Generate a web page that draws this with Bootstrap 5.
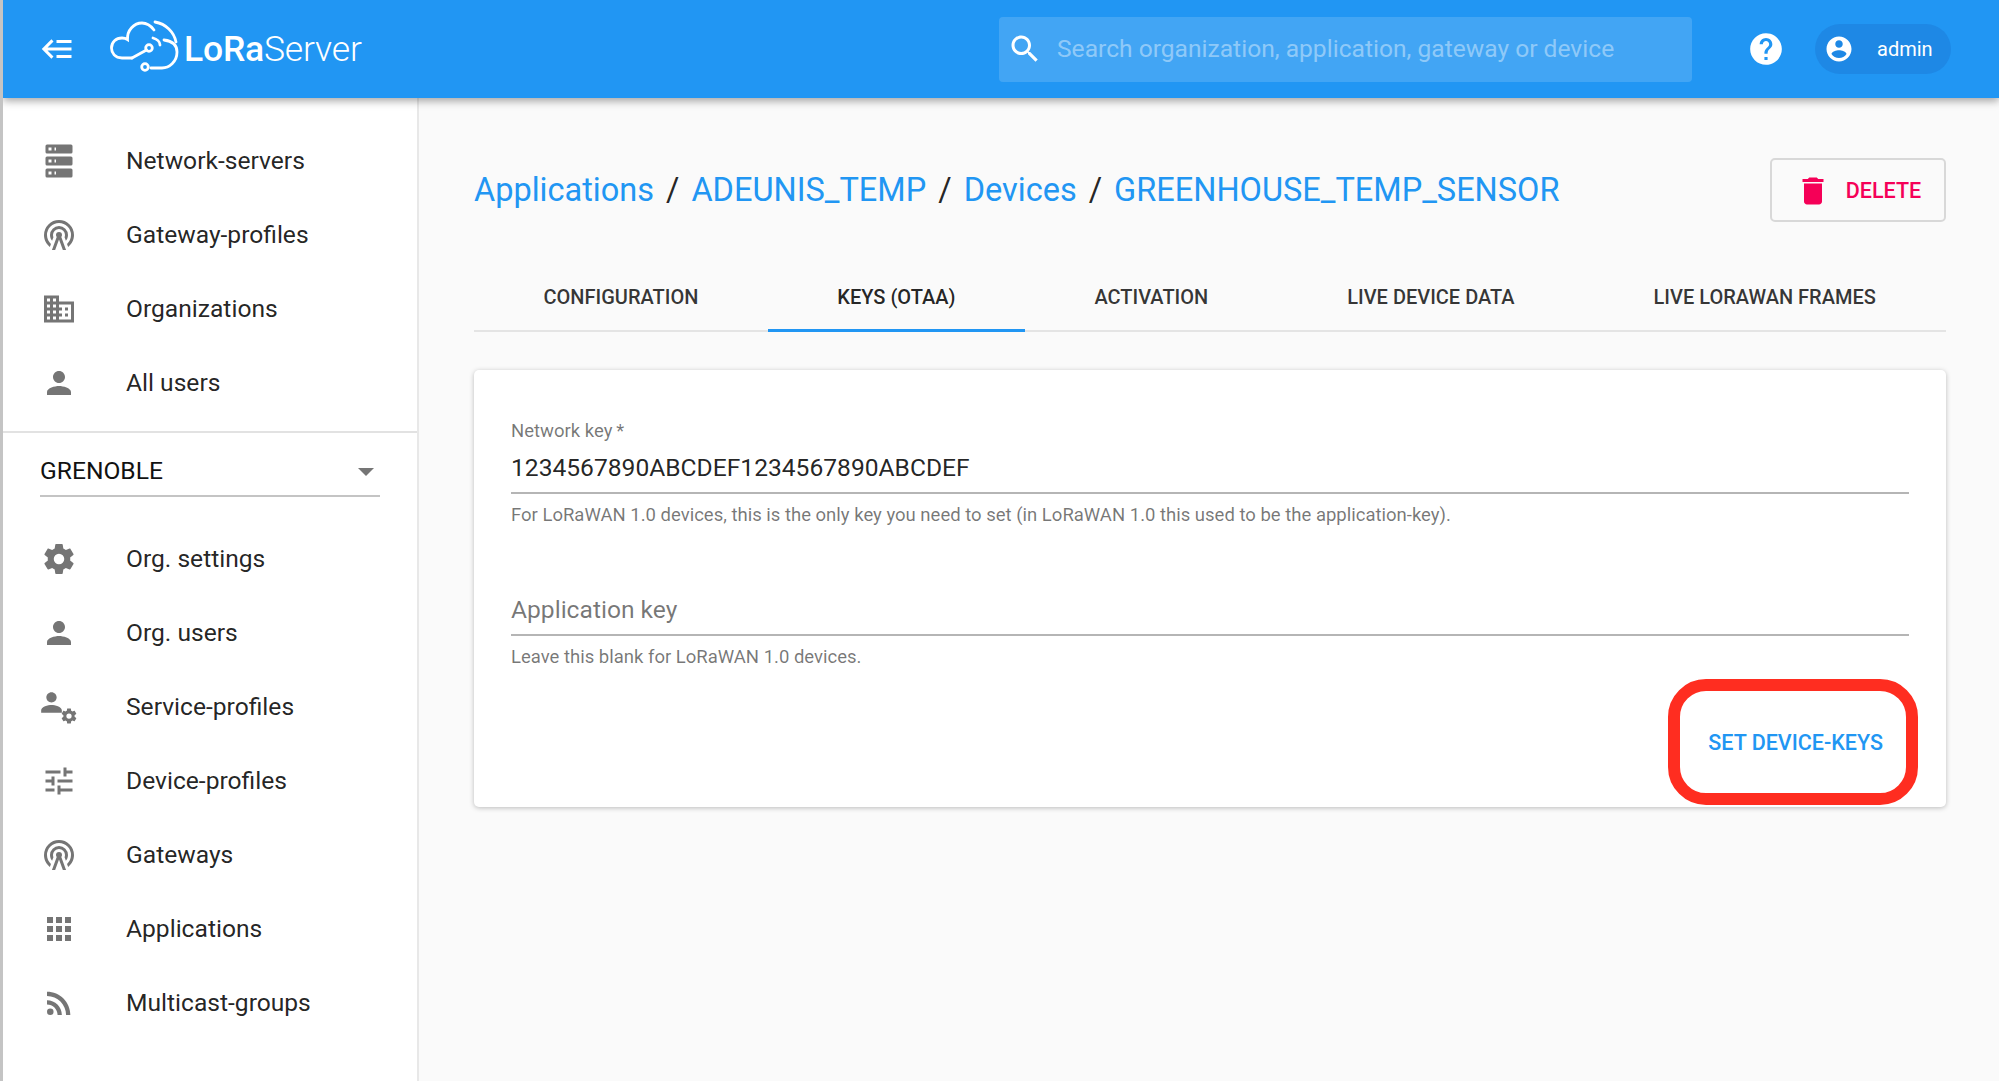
<!DOCTYPE html>
<html lang="en">
<head>
    <meta charset="UTF-8">
    <meta name="viewport" content="width=device-width, initial-scale=1.0">
    <title>LoRa Server</title>
    <link rel="stylesheet" href="https://cdn.jsdelivr.net/npm/bootstrap@5.3.0/dist/css/bootstrap.min.css">
    <style>
        html, body { height: 1081px; overflow: hidden; }
        body { font-family: Roboto, sans-serif; background: #fafafa; color: rgba(0,0,0,.87); border-left: 3px solid #c4c4c4; }
        svg { fill: currentColor; flex-shrink: 0; }
        .defs-svg { display: none; }
        .app-bar { height: 98px; background: #2196f3; color: #fff; box-shadow: 0 3px 8px rgba(0,0,0,.35); position: relative; z-index: 2; padding-left: 37px; }
        .logo-wrap { margin-left: 32px; width: 253px; }
        .logo-mark { fill: none; stroke: #fff; stroke-width: 2.8; stroke-linecap: round; }
        .logo-text { font-size: 35.5px; line-height: 1; letter-spacing: -.2px; margin-left: 4px; padding-top: 2px; font-weight: 500; }
        .logo-text span { font-weight: 300; }
        .search-box { width: 693px; height: 65px; margin-left: 638px; background: rgba(255,255,255,.15); border-radius: 4px; padding-left: 8px; }
        .search-box input { background: none; border: 0; outline: 0; flex: 1; font-size: 24.6px; margin-left: 12px; color: #fff; }
        .search-box input::placeholder { color: rgba(255,255,255,.42); }
        .help-ico { margin-left: 55px; }
        .user-pill { width: 136px; height: 50px; border-radius: 25px; background: #1e88e5; margin-left: 30px; padding-left: 9px; font-size: 20px; }
        .user-pill span { margin-left: 23px; }
        .side-menu { width: 416px; height: 983px; background: #fff; border-right: 2px solid #e8e8e8; padding-top: 26px; flex-shrink: 0; }
        .side-link { height: 74px; padding: 0 0 0 38px; border: 0; display: flex; align-items: center; color: rgba(0,0,0,.87); font-size: 24.6px; background: none; text-decoration: none; }
        .side-link svg { color: #757575; margin-right: 49px; }
        .side-rule { border-top: 2px solid #e2e2e2; margin-top: 11px; }
        .org-select { margin: 0 37px 25px; height: 64px; border-bottom: 2px solid #c4c4c4; font-size: 24.6px; color: #111; padding-top: 15px; }
        .org-caret { width: 0; height: 0; border-left: 8px solid transparent; border-right: 8px solid transparent; border-top: 8px solid #757575; margin-right: 6px; }
        .main-area { padding: 60px 53px 0 55px; }
        .crumbs { font-size: 32.5px; height: 64px; }
        .crumbs a { color: #2196f3; text-decoration: none; }
        .crumbs i { font-style: normal; margin: 0 12px; color: rgba(0,0,0,.87); }
        .del-btn { width: 176px; height: 64px; border: 2px solid #d8d8d8; border-radius: 5px; background: #fafafa; color: #f50057; font-size: 21.5px; font-weight: 500; padding: 2px 0 0; gap: 15px; }
        .tab-row { margin-top: 39px; border-bottom: 2px solid #e4e4e4; height: 71px; flex-wrap: nowrap; }
        .tab-row .nav-link { padding: 4px 69.5px 0; height: 71px; display: flex; align-items: center; white-space: nowrap; color: rgba(0,0,0,.8); font-size: 20px; font-weight: 500; border-bottom: 3px solid transparent; border-radius: 0; }
        .tab-row .nav-link.active { color: rgba(0,0,0,.87); border-bottom-color: #2196f3; }
        .key-card { margin-top: 38px; height: 437px; border: 0; border-radius: 5px; box-shadow: 0 1px 5px rgba(0,0,0,.25); padding: 49px 37px 0; }
        .key-label { font-size: 18.5px; color: rgba(0,0,0,.54); margin: 0 0 7px; line-height: 24px; display: block; }
        .key-input { border: 0; border-bottom: 2px solid #b5b5b5; border-radius: 0; background: none; padding: 0 0 6px; font-size: 24.6px; line-height: 36px; color: rgba(0,0,0,.87); box-shadow: none !important; }
        .key-input::placeholder { color: rgba(0,0,0,.54); opacity: 1; }
        .key-help { font-size: 18.5px; color: rgba(0,0,0,.54); margin-top: 9px; line-height: 25px; }
        .set-area { margin-top: 57px; padding-right: 26px; }
        .set-btn { position: relative; color: #2196f3; font-size: 21.5px; font-weight: 500; background: none; border: 0; padding: 0; }
        .mark-box { position: absolute; left: -40px; right: -35px; top: -48px; bottom: -46px; border: 12px solid #ff2d20; border-radius: 38px; pointer-events: none; }
    </style>
</head>
<body>
<svg class="defs-svg">
    <symbol id="i-server" viewBox="0 0 24 24"><path d="M4,1H20A1,1 0 0,1 21,2V6A1,1 0 0,1 20,7H4A1,1 0 0,1 3,6V2A1,1 0 0,1 4,1M4,9H20A1,1 0 0,1 21,10V14A1,1 0 0,1 20,15H4A1,1 0 0,1 3,14V10A1,1 0 0,1 4,9M4,17H20A1,1 0 0,1 21,18V22A1,1 0 0,1 20,23H4A1,1 0 0,1 3,22V18A1,1 0 0,1 4,17M9,5H10V3H9V5M9,13H10V11H9V13M9,21H10V19H9V21M5,3V5H7V3H5M5,11V13H7V11H5M5,19V21H7V19H5Z"/></symbol>
    <symbol id="i-tower" viewBox="0 0 24 24"><path d="M12,10A2,2 0 0,1 14,12C14,12.5 13.82,12.94 13.53,13.29L16.7,22H14.57L12,14.93L9.43,22H7.3L10.47,13.29C10.18,12.94 10,12.5 10,12A2,2 0 0,1 12,10M12,8A4,4 0 0,0 8,12C8,12.5 8.1,13 8.28,13.46L7.4,15.86C6.53,14.81 6,13.47 6,12A6,6 0 0,1 12,6A6,6 0 0,1 18,12C18,13.47 17.47,14.81 16.6,15.86L15.72,13.46C15.9,13 16,12.5 16,12A4,4 0 0,0 12,8M12,4A8,8 0 0,0 4,12C4,14.36 5,16.5 6.64,17.94L5.92,19.94C3.54,18.11 2,15.23 2,12A10,10 0 0,1 12,2A10,10 0 0,1 22,12C22,15.23 20.46,18.11 18.08,19.94L17.36,17.94C19,16.5 20,14.36 20,12A8,8 0 0,0 12,4Z"/></symbol>
    <symbol id="i-domain" viewBox="0 0 24 24"><path d="M12 7V3H2v18h20V7H12zM6 19H4v-2h2v2zm0-4H4v-2h2v2zm0-4H4V9h2v2zm0-4H4V5h2v2zm4 12H8v-2h2v2zm0-4H8v-2h2v2zm0-4H8V9h2v2zm0-4H8V5h2v2zm10 12h-8v-2h2v-2h-2v-2h2v-2h-2V9h8v10zm-2-8h-2v2h2v-2zm0 4h-2v2h2v-2z"/></symbol>
    <symbol id="i-person" viewBox="0 0 24 24"><path d="M12 12c2.21 0 4-1.79 4-4s-1.79-4-4-4-4 1.79-4 4 1.79 4 4 4zm0 2c-2.67 0-8 1.34-8 4v2h16v-2c0-2.66-5.33-4-8-4z"/></symbol>
    <symbol id="i-gear" viewBox="0 0 24 24"><path d="M12,15.5A3.5,3.5 0 0,1 8.5,12A3.5,3.5 0 0,1 12,8.5A3.5,3.5 0 0,1 15.5,12A3.5,3.5 0 0,1 12,15.5M19.43,12.97C19.47,12.65 19.5,12.33 19.5,12C19.5,11.67 19.47,11.34 19.43,11L21.54,9.37C21.73,9.22 21.78,8.95 21.66,8.73L19.66,5.27C19.54,5.05 19.27,4.96 19.05,5.05L16.56,6.05C16.04,5.66 15.5,5.32 14.87,5.07L14.5,2.42C14.46,2.18 14.25,2 14,2H10C9.75,2 9.54,2.18 9.5,2.42L9.13,5.07C8.5,5.32 7.96,5.66 7.44,6.05L4.95,5.05C4.73,4.96 4.46,5.05 4.34,5.27L2.34,8.73C2.21,8.95 2.27,9.22 2.46,9.37L4.57,11C4.53,11.34 4.5,11.67 4.5,12C4.5,12.33 4.53,12.65 4.57,12.97L2.46,14.63C2.27,14.78 2.21,15.05 2.34,15.27L4.34,18.73C4.46,18.95 4.73,19.03 4.95,18.95L7.44,17.94C7.96,18.34 8.5,18.68 9.13,18.93L9.5,21.58C9.54,21.82 9.75,22 10,22H14C14.25,22 14.46,21.82 14.5,21.58L14.87,18.93C15.5,18.67 16.04,18.34 16.56,17.94L19.05,18.95C19.27,19.03 19.54,18.95 19.66,18.73L21.66,15.27C21.78,15.05 21.73,14.78 21.54,14.63L19.43,12.97Z"/></symbol>
    <symbol id="i-person-gear" viewBox="0 0 36 40"><use href="#i-person" x="-5" y="0" width="31" height="31"/><use href="#i-gear" x="19" y="20" width="18" height="18"/></symbol>
    <symbol id="i-tune" viewBox="0 0 24 24"><path d="M3 17v2h6v-2H3zM3 5v2h10V5H3zm10 16v-2h8v-2h-8v-2h-2v6h2zM7 9v2H3v2h4v2h2V9H7zm14 4v-2H11v2h10zm-6-4h2V7h4V5h-4V3h-2v6z"/></symbol>
    <symbol id="i-apps" viewBox="0 0 24 24"><path d="M4 8h4V4H4v4zm6 12h4v-4h-4v4zm-6 0h4v-4H4v4zm0-6h4v-4H4v4zm6 0h4v-4h-4v4zm6-10v4h4V4h-4zm-6 4h4V4h-4v4zm6 6h4v-4h-4v4zm0 6h4v-4h-4v4z"/></symbol>
    <symbol id="i-rss" viewBox="0 0 24 24"><circle cx="6.18" cy="17.82" r="2.18"/><path d="M4 4.44v2.83c7.03 0 12.73 5.7 12.73 12.73h2.83c0-8.59-6.97-15.56-15.56-15.56zm0 5.66v2.83c3.9 0 7.07 3.17 7.07 7.07h2.83c0-5.47-4.43-9.9-9.9-9.9z"/></symbol>
</svg>

<header class="app-bar d-flex align-items-center">
    <svg width="36" height="36" viewBox="0 0 24 24"><path d="M5,13L9,17L7.6,18.42L1.18,12L7.6,5.58L9,7L5,11H21V13H5M21,6V8H11V6H21M21,16V18H11V16H21Z"/></svg>
    <div class="logo-wrap d-flex align-items-center">
        <svg class="logo-mark" width="72" height="62" viewBox="8 8 72 62">
            <path d="M32 48H22C15 48 11.5 43 11.5 38C11.5 32 16 28 22 28C24 28 26 28.5 27.5 29.5C27 20 34 13 42 13C47 13 51 16 54 20"/>
            <path d="M64 30C72 31 77 35 77 42C77 52 69 58 62 58H51"/>
            <path d="M32 48L46.5 40"/><circle cx="49" cy="38" r="3.3"/>
            <circle cx="45" cy="57" r="3.3"/>
            <path d="M53 28C57 29 60 32 60 35M55 12C66 14 74 22 76 32"/>
        </svg>
        <div class="logo-text">LoRa<span>Server</span></div>
    </div>
    <div class="search-box d-flex align-items-center">
        <svg width="36" height="36" viewBox="0 0 24 24"><path d="M15.5 14h-.79l-.28-.27C15.41 12.59 16 11.11 16 9.5 16 5.91 13.09 3 9.5 3S3 5.91 3 9.5 5.91 16 9.5 16c1.61 0 3.09-.59 4.23-1.57l.27.28v.79l5 4.99L20.49 19l-4.99-5zm-6 0C7.01 14 5 11.99 5 9.5S7.01 5 9.5 5 14 7.01 14 9.5 11.99 14 9.5 14z"/></svg>
        <input type="text" placeholder="Search organization, application, gateway or device">
    </div>
    <svg class="help-ico" width="38" height="38" viewBox="0 0 24 24"><path d="M12 2C6.48 2 2 6.48 2 12s4.48 10 10 10 10-4.48 10-10S17.52 2 12 2zm1 17h-2v-2h2v2zm2.07-7.75l-.9.92C13.45 12.9 13 13.5 13 15h-2v-.5c0-1.1.45-2.1 1.17-2.83l1.24-1.26c.37-.36.59-.86.59-1.41 0-1.1-.9-2-2-2s-2 .9-2 2H8c0-2.21 1.79-4 4-4s4 1.79 4 4c0 .88-.36 1.68-.93 2.25z"/></svg>
    <div class="user-pill d-flex align-items-center">
        <svg width="30" height="30" viewBox="0 0 24 24"><path d="M12 2C6.48 2 2 6.48 2 12s4.48 10 10 10 10-4.48 10-10S17.52 2 12 2zm0 3c1.66 0 3 1.34 3 3s-1.34 3-3 3-3-1.34-3-3 1.34-3 3-3zm0 14.2c-2.5 0-4.71-1.28-6-3.22.03-1.99 4-3.08 6-3.08 1.99 0 5.97 1.09 6 3.08-1.29 1.94-3.5 3.22-6 3.22z"/></svg>
        <span>admin</span>
    </div>
</header>

<div class="d-flex">
    <aside class="side-menu">
        <div class="list-group list-group-flush">
            <a class="side-link" href="#"><svg width="36" height="36"><use href="#i-server"/></svg>Network-servers</a>
            <a class="side-link" href="#"><svg width="36" height="36"><use href="#i-tower"/></svg>Gateway-profiles</a>
            <a class="side-link" href="#"><svg width="36" height="36"><use href="#i-domain"/></svg>Organizations</a>
            <a class="side-link" href="#"><svg width="36" height="36"><use href="#i-person"/></svg>All users</a>
        </div>
        <div class="side-rule"></div>
        <div class="org-select d-flex align-items-center justify-content-between"><span>GRENOBLE</span><div class="org-caret"></div></div>
        <div class="list-group list-group-flush">
            <a class="side-link" href="#"><svg width="36" height="36"><use href="#i-gear"/></svg>Org. settings</a>
            <a class="side-link" href="#"><svg width="36" height="36"><use href="#i-person"/></svg>Org. users</a>
            <a class="side-link" href="#"><svg width="36" height="40"><use href="#i-person-gear"/></svg>Service-profiles</a>
            <a class="side-link" href="#"><svg width="36" height="36"><use href="#i-tune"/></svg>Device-profiles</a>
            <a class="side-link" href="#"><svg width="36" height="36"><use href="#i-tower"/></svg>Gateways</a>
            <a class="side-link" href="#"><svg width="36" height="36"><use href="#i-apps"/></svg>Applications</a>
            <a class="side-link" href="#"><svg width="36" height="36"><use href="#i-rss"/></svg>Multicast-groups</a>
        </div>
    </aside>

    <main class="main-area flex-grow-1">
        <div class="d-flex justify-content-between align-items-center">
            <div class="crumbs d-flex align-items-center">
                <a href="#">Applications</a><i>/</i><a href="#">ADEUNIS_TEMP</a><i>/</i><a href="#">Devices</a><i>/</i><a href="#">GREENHOUSE_TEMP_SENSOR</a>
            </div>
            <button class="del-btn d-flex align-items-center justify-content-center" type="button">
                <svg width="36" height="36" viewBox="0 0 24 24"><path d="M6 19c0 1.1.9 2 2 2h8c1.1 0 2-.9 2-2V7H6v12zM19 4h-3.5l-1-1h-5l-1 1H5v2h14V4z"/></svg>
                DELETE
            </button>
        </div>

        <ul class="nav tab-row">
            <li class="nav-item"><a class="nav-link" href="#">CONFIGURATION</a></li>
            <li class="nav-item"><a class="nav-link active" href="#">KEYS (OTAA)</a></li>
            <li class="nav-item"><a class="nav-link" href="#">ACTIVATION</a></li>
            <li class="nav-item"><a class="nav-link" href="#">LIVE DEVICE DATA</a></li>
            <li class="nav-item"><a class="nav-link" href="#">LIVE LORAWAN FRAMES</a></li>
        </ul>

        <div class="card key-card">
            <div>
                <label class="key-label">Network key&#8201;*</label>
                <input class="form-control key-input" type="text" value="1234567890ABCDEF1234567890ABCDEF">
                <div class="key-help">For LoRaWAN 1.0 devices, this is the only key you need to set (in LoRaWAN 1.0 this used to be the application-key).</div>
            </div>
            <div class="mt-5 pt-3">
                <input class="form-control key-input" type="text" placeholder="Application key">
                <div class="key-help">Leave this blank for LoRaWAN 1.0 devices.</div>
            </div>
            <div class="set-area d-flex justify-content-end">
                <button class="set-btn" type="button">SET DEVICE-KEYS<div class="mark-box"></div></button>
            </div>
        </div>
    </main>
</div>
<script src="https://cdn.jsdelivr.net/npm/bootstrap@5.3.0/dist/js/bootstrap.bundle.min.js"></script>
</body>
</html>
